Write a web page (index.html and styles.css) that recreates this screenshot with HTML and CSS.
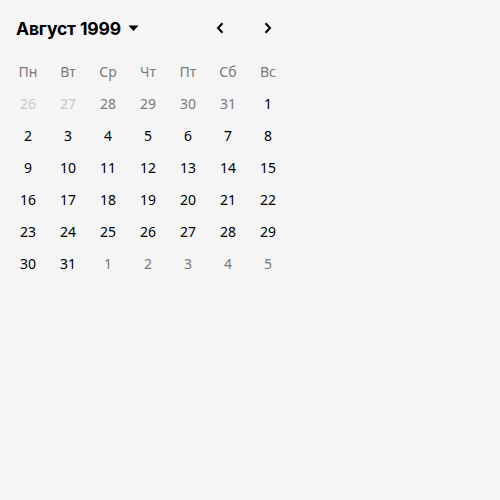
FILE: index.html
```html
<!DOCTYPE html>
<html lang="ru">
<head>
<meta charset="utf-8">
<link rel="stylesheet" href="styles.css">
</head>
<body>
<div class="cal">
  <div class="head">
    <div class="title">Август 1999 <svg class="caret" width="11" height="8" viewBox="0 0 11 8"><path d="M0.5 1.5h10L5.5 7z" fill="#000"/></svg></div>
    <div class="navs">
      <button class="nav"><svg width="10" height="12" viewBox="0 0 10 12"><path d="M7.5 1.2L3 6l4.5 4.8" fill="none" stroke="#000" stroke-width="2"/></svg></button>
      <button class="nav"><svg width="10" height="12" viewBox="0 0 10 12"><path d="M2.5 1.2L7 6l-4.5 4.8" fill="none" stroke="#000" stroke-width="2"/></svg></button>
    </div>
  </div>
  <div class="grid">
    <div class="wd">Пн</div><div class="wd">Вт</div><div class="wd">Ср</div><div class="wd">Чт</div><div class="wd">Пт</div><div class="wd">Сб</div><div class="wd">Вс</div>
    <div class="d dis">26</div><div class="d dis">27</div><div class="d out">28</div><div class="d out">29</div><div class="d out">30</div><div class="d out">31</div><div class="d">1</div>
    <div class="d">2</div><div class="d">3</div><div class="d">4</div><div class="d">5</div><div class="d">6</div><div class="d">7</div><div class="d">8</div>
    <div class="d">9</div><div class="d">10</div><div class="d">11</div><div class="d">12</div><div class="d">13</div><div class="d">14</div><div class="d">15</div>
    <div class="d">16</div><div class="d">17</div><div class="d">18</div><div class="d">19</div><div class="d">20</div><div class="d">21</div><div class="d">22</div>
    <div class="d">23</div><div class="d">24</div><div class="d">25</div><div class="d">26</div><div class="d">27</div><div class="d">28</div><div class="d">29</div>
    <div class="d">30</div><div class="d">31</div><div class="d out">1</div><div class="d out">2</div><div class="d out">3</div><div class="d out">4</div><div class="d out">5</div>
  </div>
</div>
</body>
</html>
```
FILE: styles.css
```css
html, body { margin: 0; padding: 0; background: #f5f5f5; }
body { font-family: "Noto Sans", sans-serif; color: #000; }
.cal { width: 280px; padding: 8px; }
.head { display: flex; align-items: center; justify-content: space-between; height: 40px; padding-left: 8px; }
.title { font-family: Inter, "Noto Sans", sans-serif; font-weight: 700; font-size: 17.5px; letter-spacing: -0.15px; display: flex; align-items: center; gap: 7px; }
.caret { display: block; }
.navs { display: flex; gap: 8px; }
.nav { width: 40px; height: 40px; border: 0; background: none; padding: 0; display: flex; align-items: center; justify-content: center; }
.grid { display: grid; grid-template-columns: repeat(7, 40px); grid-auto-rows: 32px; margin-top: 7px; }
.wd, .d { display: flex; align-items: center; justify-content: center; font-size: 14px; }
.wd { color: #7a7a7a; }
.d.dis { color: #c8c8c8; }
.d.out { color: #7a7a7a; }
```
